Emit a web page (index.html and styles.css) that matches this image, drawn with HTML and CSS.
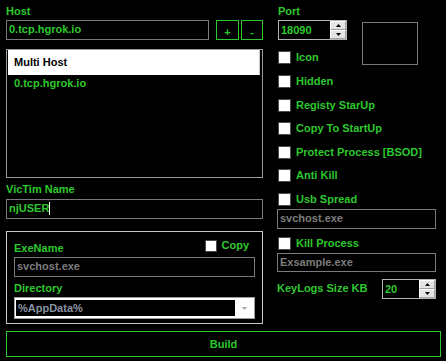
FILE: index.html
```html
<!DOCTYPE html>
<html lang="en">
<head>
    <meta charset="UTF-8">
    <meta name="viewport" content="width=device-width, initial-scale=1.0">
    <title>Builder</title>
    <link rel="stylesheet" href="styles.css">
</head>
<body>
    <div class="main">
        <!-- left side -->
        <div class="left">
            <div class="lbl">Host</div>
            <div class="host-row">
                <div class="field host">0.tcp.hgrok.io</div>
                <button class="sq sq-plus">+</button>
                <button class="sq sq-minus">-</button>
            </div>
            <div class="hostlist">
                <div class="list-head">Multi Host</div>
                <div class="list-item">0.tcp.hgrok.io</div>
            </div>

            <div class="lbl victim-lbl">VicTim Name</div>
            <div class="field victim">njUSER<span class="caret"></span></div>

            <div class="group">
                <div class="group-head">
                    <div class="lbl exe-lbl">ExeName</div>
                    <div class="check copy">
                        <span class="cb cb-small"></span>
                        <span class="check-text">Copy</span>
                    </div>
                </div>
                <div class="field grey exe">svchost.exe</div>
                <div class="lbl dir-lbl">Directory</div>
                <div class="select">
                    <div class="select-val">%AppData%</div>
                    <div class="select-arrow">
                        <svg width="5" height="3" viewBox="0 0 5 3"><path d="M0 0H5L2.5 3Z" fill="#a8a8a8"/></svg>
                    </div>
                </div>
            </div>
        </div>

        <!-- right side -->
        <div class="right">
            <div class="top">
                <div class="port-col">
                    <div class="lbl">Port</div>
                    <div class="spin port">
                        <div class="spin-val">18090</div>
                        <div class="spin-btns">
                            <div class="spin-btn"><svg width="5" height="3" viewBox="0 0 5 3"><path d="M0 3H5L2.5 0Z"/></svg></div>
                            <div class="spin-btn"><svg width="5" height="3" viewBox="0 0 5 3"><path d="M0 0H5L2.5 3Z"/></svg></div>
                        </div>
                    </div>
                    <div class="check icon-row">
                        <span class="cb"></span>
                        <span class="check-text">Icon</span>
                    </div>
                </div>
                <div class="preview"></div>
            </div>

            <div class="checks">
                <div class="check"><span class="cb"></span><span class="check-text">Hidden</span></div>
                <div class="check"><span class="cb"></span><span class="check-text">Registy StarUp</span></div>
                <div class="check"><span class="cb"></span><span class="check-text">Copy To StartUp</span></div>
                <div class="check"><span class="cb"></span><span class="check-text">Protect Process [BSOD]</span></div>
                <div class="check"><span class="cb"></span><span class="check-text">Anti Kill</span></div>
                <div class="check"><span class="cb"></span><span class="check-text">Usb Spread</span></div>
            </div>
            <div class="field grey usb-name">svchost.exe</div>

            <div class="check kill-row"><span class="cb"></span><span class="check-text">Kill Process</span></div>
            <div class="field grey kill-name">Exsample.exe</div>

            <div class="keylog-row">
                <span>KeyLogs Size KB</span>
                <div class="spin keylog">
                    <div class="spin-val">20</div>
                    <div class="spin-btns">
                        <div class="spin-btn"><svg width="5" height="3" viewBox="0 0 5 3"><path d="M0 3H5L2.5 0Z"/></svg></div>
                        <div class="spin-btn"><svg width="5" height="3" viewBox="0 0 5 3"><path d="M0 0H5L2.5 3Z"/></svg></div>
                    </div>
                </div>
            </div>
        </div>
    </div>

    <button class="build">Build</button>
</body>
</html>
```

FILE: styles.css
```css
* {
    box-sizing: border-box;
}
body {
    margin: 0;
    padding: 5px 0 0 6px;
    width: 446px;
    height: 361px;
    overflow: hidden;
    background: #000;
    color: #2ec82e;
    font: bold 11px/13px "Liberation Sans", Arial, sans-serif;
}
.main {
    display: flex;
    gap: 14px;
}
.left {
    width: 257px;
}
.right {
    width: 159px;
    display: flex;
    flex-direction: column;
}
.lbl {
    display: block;
}
.field {
    height: 20px;
    border: 1px solid #7a7a7a;
    padding: 0 2px;
    line-height: 16px;
    background: #000;
    white-space: nowrap;
}
.field.grey {
    color: #7c7c7c;
}
.host-row {
    display: flex;
    margin-top: 2px;
}
.host {
    width: 203px;
}
.sq {
    width: 23px;
    height: 20px;
    padding: 4px 0 0;
    border: 1px solid #2ec82e;
    background: #000;
    color: #2ec82e;
    font: inherit;
    line-height: 12px;
}
.sq-plus {
    margin-left: 7px;
}
.sq-minus {
    width: 22px;
    margin-left: 2px;
}
.hostlist {
    height: 129px;
    margin-top: 9px;
    border: 1px solid #9a9a9a;
    padding: 0 2px 0 1px;
}
.list-head {
    height: 25px;
    padding-left: 6px;
    background: #fff;
    color: #000;
    border-right: 1px solid #c8c8c8;
    line-height: 25px;
}
.list-item {
    margin-top: 2px;
    padding-left: 6px;
}
.victim-lbl {
    margin-top: 5px;
}
.victim {
    margin-top: 3px;
}
.caret {
    display: inline-block;
    width: 1px;
    height: 13px;
    background: #fff;
    vertical-align: -3px;
}
.group {
    margin-top: 12px;
    border: 1px solid #c8c8c8;
    padding: 7px 7px 4px;
}
.group-head {
    display: flex;
    justify-content: space-between;
    align-items: flex-start;
}
.exe-lbl {
    margin-top: 3px;
}
.copy {
    margin-right: 6px;
}
.exe {
    margin-top: 2px;
}
.dir-lbl {
    margin-top: 5px;
}
.select {
    display: flex;
    height: 22px;
    margin-top: 2px;
    border: 1px solid #a0a0a0;
    background: #fff;
    padding: 2px 0 2px 1px;
}
.select-val {
    flex: 1;
    padding-left: 2px;
    background: #000;
    color: #8a93a0;
    line-height: 16px;
}
.select-arrow {
    width: 19px;
    display: flex;
    align-items: center;
    justify-content: center;
}
.top {
    display: flex;
    align-items: flex-start;
}
.port-col {
    width: 69px;
    margin-left: 1px;
}
.spin {
    display: flex;
    height: 20px;
    border: 1px solid #b4b4b4;
    background: #000;
}
.port {
    width: 69px;
    margin-top: 2px;
}
.spin-val {
    flex: 1;
    padding-left: 2px;
    line-height: 18px;
}
.spin-btns {
    width: 16px;
    display: flex;
    flex-direction: column;
}
.spin-btn {
    flex: 1;
    display: flex;
    align-items: center;
    justify-content: center;
    background: #e4e4e4;
    border: 1px solid;
    border-color: #fff #a0a0a0 #a0a0a0 #fff;
}
.preview {
    width: 56px;
    height: 43px;
    margin: 17px 0 0 15px;
    border: 1px solid #7a7a7a;
}
.check {
    display: flex;
    align-items: center;
    height: 13px;
    margin-left: 1px;
    white-space: nowrap;
}
.cb {
    width: 13px;
    height: 13px;
    background: #fff;
    border: 1px solid #4a4a4a;
    flex-shrink: 0;
}
.cb-small {
    width: 12px;
    height: 12px;
}
.check-text {
    margin-left: 5px;
}
.icon-row {
    margin-top: 11px;
    margin-left: 0;
}
.checks {
    display: flex;
    flex-direction: column;
    gap: 10.6px;
    margin-top: 10px;
}
.usb-name {
    margin-top: 3px;
}
.kill-row {
    margin-top: 8px;
}
.kill-name {
    height: 19px;
    margin-top: 3px;
}
.keylog-row {
    display: flex;
    justify-content: space-between;
    align-items: center;
    margin-top: 7px;
}
.keylog {
    width: 54px;
}
.build {
    display: block;
    width: 435px;
    height: 26px;
    margin-top: 7px;
    border: 1px solid #2ec82e;
    background: #000;
    color: #2ec82e;
    font: inherit;
}
```
